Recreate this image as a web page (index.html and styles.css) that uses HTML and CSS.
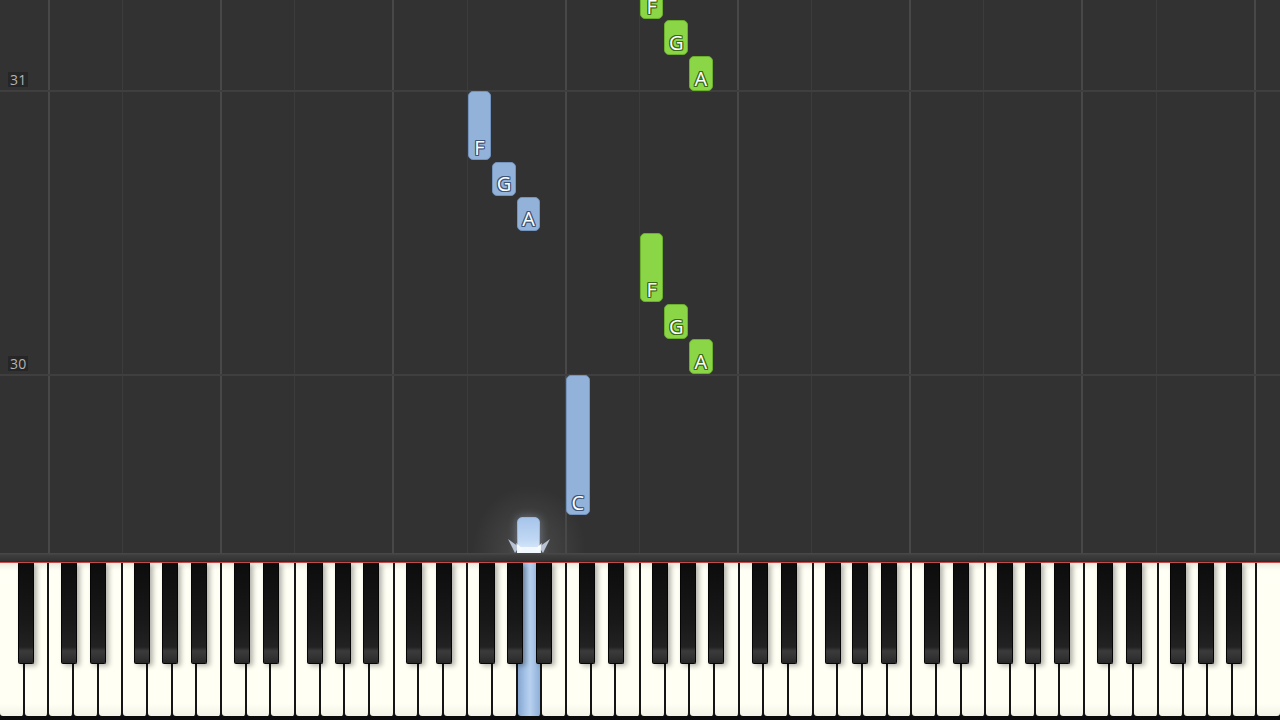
FILE: index.html
```html
<!DOCTYPE html>
<html lang="en">
<head>
<meta charset="utf-8">
<title>Piano roll</title>
<link rel="stylesheet" href="styles.css">
</head>
<body>
<div class="app">
  <div class="roll">
    <div class="ln"></div><div class="ln"></div>
    <div class="ln c"></div><div class="ln"></div><div class="ln"></div><div class="ln f"></div><div class="ln"></div><div class="ln"></div><div class="ln"></div>
    <div class="ln c"></div><div class="ln"></div><div class="ln"></div><div class="ln f"></div><div class="ln"></div><div class="ln"></div><div class="ln"></div>
    <div class="ln c"></div><div class="ln"></div><div class="ln"></div>
    <div class="ln f">
      <div class="note l" style="top:91px;height:69px"><span>F</span></div>
    </div>
    <div class="ln">
      <div class="note l" style="top:162px;height:34px"><span>G</span></div>
    </div>
    <div class="ln">
      <div class="note l" style="top:197px;height:34px"><span>A</span></div>
      <div class="halo"></div>
      <div class="note l play" style="top:517px;height:40px"></div>
      <svg class="splash" viewBox="0 0 64 26" width="64" height="26" aria-hidden="true">
        <defs>
          <radialGradient id="sg" cx="50%" cy="100%" r="55%">
            <stop offset="0" stop-color="#ffffff" stop-opacity="1"/>
            <stop offset="0.45" stop-color="#e2efff" stop-opacity="0.85"/>
            <stop offset="1" stop-color="#b8d3f2" stop-opacity="0"/>
          </radialGradient>
        </defs>
        <ellipse cx="32" cy="26" rx="32" ry="10" fill="url(#sg)"/>
        <path d="M18 26 L11 12 L22 20 Z" fill="#dbeaff" opacity="0.75"/>
        <path d="M46 26 L53 12 L42 20 Z" fill="#dbeaff" opacity="0.75"/>
        <path d="M22 26 L19 16 L26 22 Z" fill="#ffffff" opacity="0.9"/>
        <path d="M42 26 L45 16 L38 22 Z" fill="#ffffff" opacity="0.9"/>
        <rect x="20" y="20" width="24" height="6" fill="#f4f9ff" opacity="0.9"/>
      </svg>
    </div>
    <div class="ln"></div>
    <div class="ln c">
      <div class="note l" style="top:375px;height:140px"><span>C</span></div>
    </div>
    <div class="ln"></div><div class="ln"></div>
    <div class="ln f">
      <div class="note r" style="top:-50px;height:69px"><span>F</span></div>
      <div class="note r" style="top:233px;height:69px"><span>F</span></div>
    </div>
    <div class="ln">
      <div class="note r" style="top:20px;height:35px"><span>G</span></div>
      <div class="note r" style="top:304px;height:35px"><span>G</span></div>
    </div>
    <div class="ln">
      <div class="note r" style="top:56px;height:35px"><span>A</span></div>
      <div class="note r" style="top:339px;height:35px"><span>A</span></div>
    </div>
    <div class="ln"></div>
    <div class="ln c"></div><div class="ln"></div><div class="ln"></div><div class="ln f"></div><div class="ln"></div><div class="ln"></div><div class="ln"></div>
    <div class="ln c"></div><div class="ln"></div><div class="ln"></div><div class="ln f"></div><div class="ln"></div><div class="ln"></div><div class="ln"></div>
    <div class="ln c"></div><div class="ln"></div><div class="ln"></div><div class="ln f"></div><div class="ln"></div><div class="ln"></div><div class="ln"></div>
    <div class="ln c"></div>

    <div class="bar bar31"></div>
    <div class="bar bar30"></div>
    <div class="mnum m31">31</div>
    <div class="mnum m30">30</div>
  </div>

  <div class="kb">
    <div class="band"></div>
    <div class="keys">
      <div class="wk"><i class="bk as"></i></div><div class="wk"></div>

      <div class="wk"><i class="bk cs"></i></div><div class="wk"><i class="bk ds"></i></div><div class="wk"></div><div class="wk"><i class="bk fs"></i></div><div class="wk"><i class="bk gs"></i></div><div class="wk"><i class="bk as"></i></div><div class="wk"></div>

      <div class="wk"><i class="bk cs"></i></div><div class="wk"><i class="bk ds"></i></div><div class="wk"></div><div class="wk"><i class="bk fs"></i></div><div class="wk"><i class="bk gs"></i></div><div class="wk"><i class="bk as"></i></div><div class="wk"></div>

      <div class="wk"><i class="bk cs"></i></div><div class="wk"><i class="bk ds"></i></div><div class="wk"></div><div class="wk"><i class="bk fs"></i></div><div class="wk"><i class="bk gs"></i></div><div class="wk on"><i class="bk as"></i></div><div class="wk"></div>

      <div class="wk"><i class="bk cs"></i></div><div class="wk"><i class="bk ds"></i></div><div class="wk"></div><div class="wk"><i class="bk fs"></i></div><div class="wk"><i class="bk gs"></i></div><div class="wk"><i class="bk as"></i></div><div class="wk"></div>

      <div class="wk"><i class="bk cs"></i></div><div class="wk"><i class="bk ds"></i></div><div class="wk"></div><div class="wk"><i class="bk fs"></i></div><div class="wk"><i class="bk gs"></i></div><div class="wk"><i class="bk as"></i></div><div class="wk"></div>

      <div class="wk"><i class="bk cs"></i></div><div class="wk"><i class="bk ds"></i></div><div class="wk"></div><div class="wk"><i class="bk fs"></i></div><div class="wk"><i class="bk gs"></i></div><div class="wk"><i class="bk as"></i></div><div class="wk"></div>

      <div class="wk"><i class="bk cs"></i></div><div class="wk"><i class="bk ds"></i></div><div class="wk"></div><div class="wk"><i class="bk fs"></i></div><div class="wk"><i class="bk gs"></i></div><div class="wk"><i class="bk as"></i></div><div class="wk"></div>

      <div class="wk last"></div>
    </div>
  </div>
</div>
</body>
</html>
```

FILE: styles.css
```css
html, body {
  margin: 0;
  padding: 0;
}
body {
  width: 1280px;
  height: 720px;
  overflow: hidden;
  background: #323232;
  font-family: "Open Sans", "Noto Sans", "DejaVu Sans", sans-serif;
}
.app {
  display: flex;
  flex-direction: column;
  height: 720px;
}

/* ---------- falling-notes area ---------- */
.roll {
  position: relative;
  height: 553px;
  display: flex;
  background: #323232;
  overflow: hidden;
}
.ln {
  flex: 1;
  position: relative;
}
.ln.c::before,
.ln.f::before {
  content: "";
  position: absolute;
  top: 0;
  bottom: 0;
}
.ln.c::before {
  left: -1.5px;
  width: 2px;
  background: #484848;
}
.ln.f::before {
  left: -1px;
  width: 1px;
  background: #3c3c3c;
}

.bar {
  position: absolute;
  left: 0;
  right: 0;
  height: 1.5px;
  background: #3f3f3f;
}
.bar31 { top: 90px; }
.bar30 { top: 374px; }

.mnum {
  position: absolute;
  left: 8px;
  padding: 0 2px;
  background: #262626;
  color: #b3b3b3;
  font-size: 14px;
  line-height: 15px;
  letter-spacing: 0.2px;
}
.m31 { top: 72px; }
.m30 { top: 356px; }

/* notes */
.note {
  position: absolute;
  left: 0;
  right: 1px;
  box-sizing: border-box;
  border-radius: 5px;
  display: flex;
  align-items: flex-end;
  justify-content: center;
  padding-bottom: 1px;
  z-index: 1;
}
.note span {
  font-size: 20px;
  line-height: 1;
  color: #ffffff;
}
.note.l {
  background: #92b2d9;
  border: 1px solid #7494bd;
}
.note.l span {
  text-shadow:
    1px 0 #3e5577, -1px 0 #3e5577, 0 1px #3e5577, 0 -1px #3e5577,
    1px 1px #3e5577, -1px -1px #3e5577, 1px -1px #3e5577, -1px 1px #3e5577;
}
.note.r {
  background: #8bd646;
  border: 1px solid #6bb02b;
}
.note.r span {
  text-shadow:
    1px 0 #3a6a17, -1px 0 #3a6a17, 0 1px #3a6a17, 0 -1px #3a6a17,
    1px 1px #3a6a17, -1px -1px #3a6a17, 1px -1px #3a6a17, -1px 1px #3a6a17;
}
.note.play {
  background: linear-gradient(to bottom, #a6c4ea, #bfd7f3 55%, #e6f1ff);
  border-color: #98b7df;
  box-shadow: 0 0 10px rgba(200, 224, 255, 0.35);
}
.halo {
  position: absolute;
  left: -45px;
  right: -45px;
  top: 470px;
  height: 130px;
  background: radial-gradient(ellipse 50% 50% at 50% 62%, rgba(255, 255, 255, 0.13), rgba(255, 255, 255, 0) 100%);
  pointer-events: none;
}
.splash {
  position: absolute;
  left: 50%;
  margin-left: -32px;
  top: 527px;
  z-index: 2;
}

/* ---------- keyboard ---------- */
.kb {
  height: 167px;
  display: flex;
  flex-direction: column;
  background: #000;
}
.band {
  height: 9px;
  background: linear-gradient(to bottom, #4a4a4a, #3c3c3c 30%, #343434 80%, #2a2a2a);
}
.keys {
  flex: 1;
  display: flex;
  border-top: 1px solid #c94d4d;
  padding-bottom: 4px;
  background: #0b0b0b;
}
.wk {
  flex: 1;
  position: relative;
  box-sizing: border-box;
  border-right: 2px solid #151515;
  border-radius: 0 0 3px 3px;
  background: linear-gradient(to bottom, #ecebe0, #fffff5 5%, #fffff4 92%, #f3f2e6);
}
.wk.last {
  border-right: none;
}
.wk.on {
  background: linear-gradient(to right, #86a6cf, #a6c4e8 35%, #b7d1ef 55%, #8fafd7);
}
.bk {
  position: absolute;
  top: 0;
  width: 16px;
  height: 101px;
  z-index: 3;
  box-sizing: border-box;
  border: 1px solid #050505;
  border-top: none;
  border-radius: 0 0 2px 2px;
  background: linear-gradient(to bottom, #0c0c0c, #191919 60%, #222 84%, #3b3b3b 88%, #333 94%, #272727);
  box-shadow: 3px 2px 5px rgba(0, 0, 0, 0.3);
}
.bk.cs { left: calc(100% - 10.7px); }
.bk.ds { left: calc(100% - 6.3px); }
.bk.fs { left: calc(100% - 11.8px); }
.bk.gs { left: calc(100% - 8.6px); }
.bk.as { left: calc(100% - 4.6px); }
```
